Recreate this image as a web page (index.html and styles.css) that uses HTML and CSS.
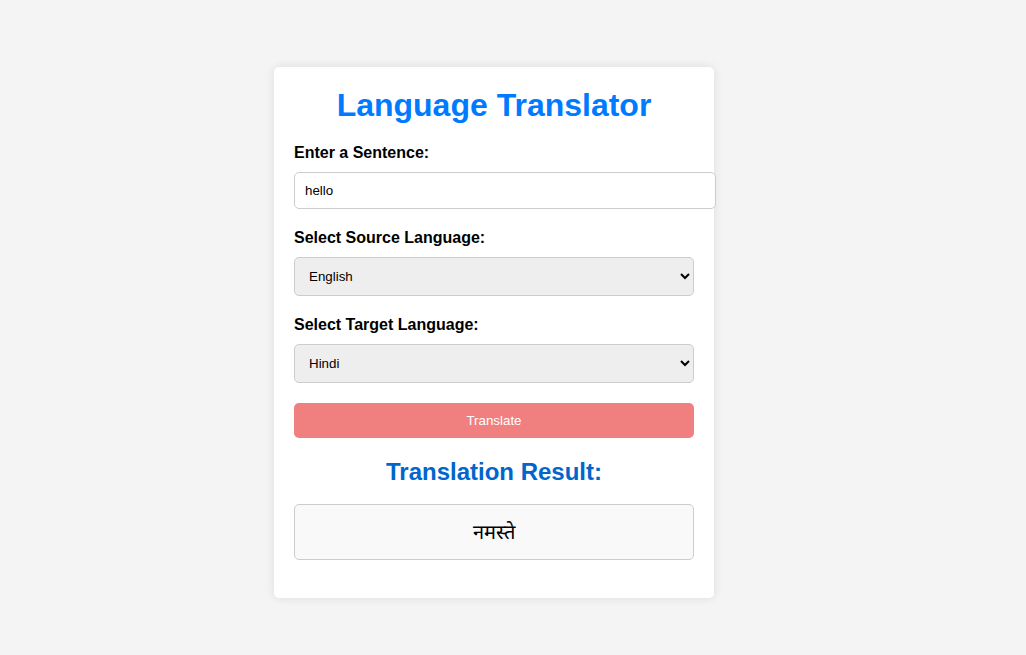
FILE: index.html
```html
<!DOCTYPE html>
<html lang="en">
<head>
<meta charset="UTF-8">
<title>Language Translator</title>
<link rel="stylesheet" href="styles.css">
</head>
<body>
<div class="container">
  <h1 class="title">Language Translator</h1>
  <label class="field-label" for="sentence">Enter a Sentence:</label>
  <input class="text-input" id="sentence" type="text" value="hello">
  <label class="field-label" for="source">Select Source Language:</label>
  <select class="select-input" id="source">
    <option selected>English</option>
    <option>Hindi</option>
  </select>
  <label class="field-label" for="target">Select Target Language:</label>
  <select class="select-input" id="target">
    <option>English</option>
    <option selected>Hindi</option>
  </select>
  <button class="translate-btn" type="button">Translate</button>
  <h2 class="result-title">Translation Result:</h2>
  <div class="result-box">नमस्ते</div>
</div>
</body>
</html>
```
FILE: styles.css
```css
html, body {
  margin: 0;
  padding: 0;
}
body {
  background: #f4f4f4;
  font-family: "Liberation Sans", Arial, sans-serif;
  padding-top: 67px;
  padding-left: 274px;
  min-height: 100vh;
  box-sizing: border-box;
}
.container {
  width: 400px;
  padding: 20px;
  background: #fff;
  border-radius: 5px;
  box-shadow: 0 0 10px rgba(0, 0, 0, 0.1);
}
.title {
  margin: 0 0 20px;
  text-align: center;
  color: #007bff;
  font-size: 32px;
  line-height: 37px;
}
.field-label {
  display: block;
  font-weight: bold;
  font-size: 16px;
  margin-bottom: 10px;
}
.text-input {
  display: block;
  width: 100%;
  padding: 10px;
  margin: 0 0 20px;
  border: 1px solid #ccc;
  border-radius: 5px;
  font-family: "Liberation Sans", Arial, sans-serif;
  font-size: 13.333px;
  background: #fff;
  color: #000;
}
.select-input {
  display: block;
  width: 100%;
  padding: 10px;
  margin: 0 0 20px;
  border: 1px solid #ccc;
  border-radius: 5px;
  font-family: "Liberation Sans", Arial, sans-serif;
  font-size: 13.333px;
  background-color: #eeeeee;
  color: #000;
}
.translate-btn {
  display: block;
  width: 100%;
  padding: 10px;
  border: none;
  border-radius: 5px;
  background: #f08080;
  color: #fff;
  font-family: "Liberation Sans", Arial, sans-serif;
  font-size: 13.333px;
}
.result-title {
  margin: 20px 0 18px;
  text-align: center;
  color: #0066cc;
  font-size: 24px;
}
.result-box {
  padding: 15px;
  border: 1px solid #ccc;
  border-radius: 5px;
  background: #f9f9f9;
  text-align: center;
  font-size: 20px;
  line-height: 24px;
  font-family: "Liberation Serif", serif;
  margin-bottom: 18px;
}
```
